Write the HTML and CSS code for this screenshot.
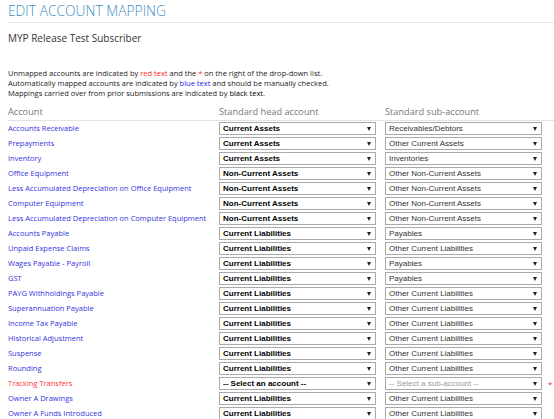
FILE: index.html
```html
<!DOCTYPE html>
<html>
<head>
<meta charset="utf-8">
<link rel="stylesheet" href="styles.css">
</head>
<body>
<h1 class="title">EDIT ACCOUNT MAPPING</h1>
<div class="subtitle">MYP Release Test Subscriber</div>
<div class="notes">
  <div>Unmapped accounts are indicated by <span class="red">red text</span> and the <span class="red">*</span> on the right of the drop-down list.</div>
  <div>Automatically mapped accounts are indicated by <span class="blue">blue text</span> and should be manually checked.</div>
  <div>Mappings carried over from prior submissions are indicated by <span class="black">black text</span>.</div>
</div>
<div class="grid">
  <div class="hd">Account</div><div class="hd">Standard head account</div><div class="hd">Standard sub-account</div><div class="hd"></div>

  <div class="acc">Accounts Receivable</div><div class="sel head">Current Assets</div><div class="sel sub">Receivables/Debtors</div><div></div>
  <div class="acc">Prepayments</div><div class="sel head">Current Assets</div><div class="sel sub">Other Current Assets</div><div></div>
  <div class="acc">Inventory</div><div class="sel head">Current Assets</div><div class="sel sub">Inventories</div><div></div>
  <div class="acc">Office Equipment</div><div class="sel head">Non-Current Assets</div><div class="sel sub">Other Non-Current Assets</div><div></div>
  <div class="acc">Less Accumulated Depreciation on Office Equipment</div><div class="sel head">Non-Current Assets</div><div class="sel sub">Other Non-Current Assets</div><div></div>
  <div class="acc">Computer Equipment</div><div class="sel head">Non-Current Assets</div><div class="sel sub">Other Non-Current Assets</div><div></div>
  <div class="acc">Less Accumulated Depreciation on Computer Equipment</div><div class="sel head">Non-Current Assets</div><div class="sel sub">Other Non-Current Assets</div><div></div>
  <div class="acc">Accounts Payable</div><div class="sel head">Current Liabilities</div><div class="sel sub">Payables</div><div></div>
  <div class="acc">Unpaid Expense Claims</div><div class="sel head">Current Liabilities</div><div class="sel sub">Other Current Liabilities</div><div></div>
  <div class="acc">Wages Payable - Payroll</div><div class="sel head">Current Liabilities</div><div class="sel sub">Payables</div><div></div>
  <div class="acc">GST</div><div class="sel head">Current Liabilities</div><div class="sel sub">Payables</div><div></div>
  <div class="acc">PAYG Withholdings Payable</div><div class="sel head">Current Liabilities</div><div class="sel sub">Other Current Liabilities</div><div></div>
  <div class="acc">Superannuation Payable</div><div class="sel head">Current Liabilities</div><div class="sel sub">Other Current Liabilities</div><div></div>
  <div class="acc">Income Tax Payable</div><div class="sel head">Current Liabilities</div><div class="sel sub">Other Current Liabilities</div><div></div>
  <div class="acc">Historical Adjustment</div><div class="sel head">Current Liabilities</div><div class="sel sub">Other Current Liabilities</div><div></div>
  <div class="acc">Suspense</div><div class="sel head">Current Liabilities</div><div class="sel sub">Other Current Liabilities</div><div></div>
  <div class="acc">Rounding</div><div class="sel head">Current Liabilities</div><div class="sel sub">Other Current Liabilities</div><div></div>
  <div class="acc unmapped">Tracking Transfers</div><div class="sel head">-- Select an account --</div><div class="sel sub placeholder">-- Select a sub-account --</div><div class="star">*</div>
  <div class="acc">Owner A Drawings</div><div class="sel head">Current Liabilities</div><div class="sel sub">Other Current Liabilities</div><div></div>
  <div class="acc">Owner A Funds Introduced</div><div class="sel head">Current Liabilities</div><div class="sel sub">Other Current Liabilities</div><div></div>
</div>
</body>
</html>
```
FILE: styles.css
```css
html, body {
  margin: 0;
  padding: 0;
  background: #ffffff;
}
body {
  padding: 0 8px;
  font-family: "Open Sans", "DejaVu Sans", sans-serif;
  color: #333333;
}
.title {
  margin: 0 -8px 0 0;
  font-weight: 300;
  font-size: 13.8px;
  line-height: 22px;
  color: #3a8cbf;
  border-bottom: 1px solid #e2e2e2;
}
.subtitle {
  margin-top: 8px;
  font-size: 10px;
  line-height: 14px;
  color: #333333;
}
.notes {
  margin-top: 24px;
  font-size: 7.5px;
  line-height: 9.8px;
  color: #222222;
}
.red { color: #ff2222; }
.blue { color: #2222ee; }
.black { color: #000000; }
.grid {
  margin-top: 7px;
  display: grid;
  grid-template-columns: 202px 157px 157px 8px;
  column-gap: 9px;
  width: 542px;
}
.hd {
  font-size: 9.2px;
  line-height: 14px;
  color: #777777;
  border-bottom: 1px solid #e2e2e2;
  padding-bottom: 1px;
  margin-right: -9px;
}
.acc {
  font-size: 7.5px;
  line-height: 15px;
  height: 15px;
  color: #3333dd;
  white-space: nowrap;
}
.acc.unmapped { color: #ff3333; }
.sel {
  margin-top: 1px;
  height: 13px;
  box-sizing: border-box;
  border: 1px solid #a9a9a9;
  background: #ffffff;
  font-family: "Liberation Sans", Arial, sans-serif;
  font-size: 8px;
  line-height: 11px;
  padding-left: 3px;
  position: relative;
  white-space: nowrap;
  color: #111111;
}
.sel::after {
  content: "";
  position: absolute;
  right: 4px;
  top: 4px;
  border-left: 2px solid transparent;
  border-right: 2px solid transparent;
  border-top: 4px solid #222222;
}
.head {
  font-weight: bold;
  color: #000000;
}
.sub {
  color: #333333;
}
.sub.placeholder { color: #999999; }
.star {
  color: #ff2222;
  font-size: 8px;
  line-height: 15px;
  margin-left: -3px;
}
```
